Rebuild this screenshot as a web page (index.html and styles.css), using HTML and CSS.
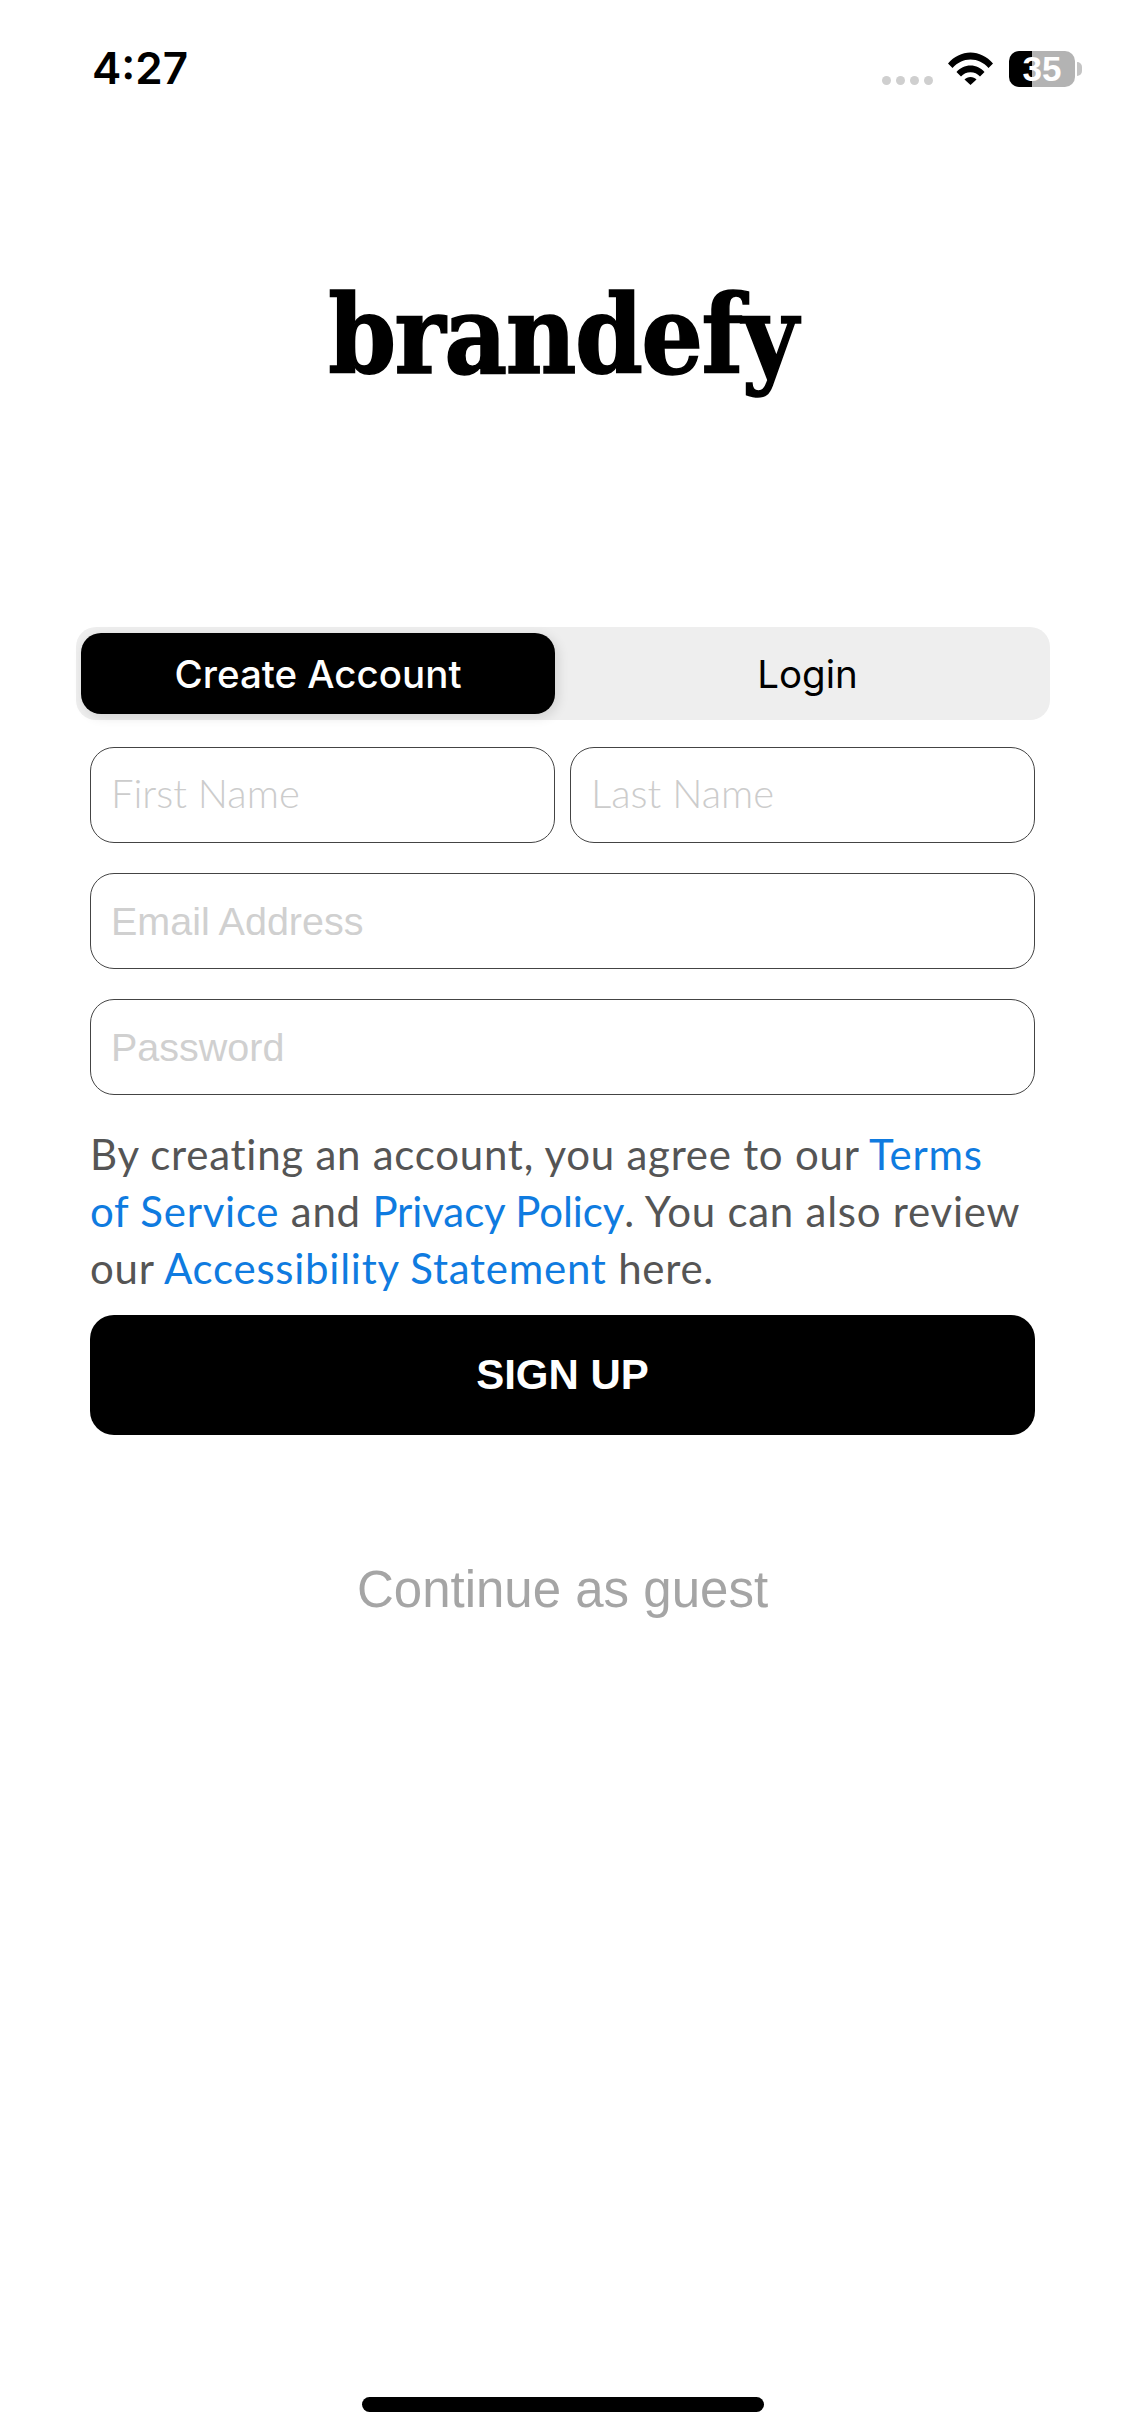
FILE: index.html
```html
<!DOCTYPE html>
<html lang="en">
<head>
<meta charset="utf-8">
<title>brandefy</title>
<link rel="stylesheet" href="styles.css">
</head>
<body>
<main class="screen">
  <header class="status">
    <span class="time">4:27</span>
    <div class="status-icons">
      <div class="signal"><i></i><i></i><i></i><i></i></div>
      <svg class="wifi" viewBox="0 0 45 33" aria-hidden="true">
        <path d="M0 11.5C6 4.5 14 0.5 22.5 0.5S39 4.5 45 11.5L40.5 16C35.5 10.500 29.500 7.500 22.500 7.500S9.500 10.500 4.500 16Z"/>
        <path d="M8.500 20C12 16 17 13.500 22.500 13.500S33 16 36.500 20L32 24.500C29.500 21.700 26.200 20.200 22.500 20.200S15.500 21.700 13 24.500Z"/>
        <path d="M16.500 27.500C18 26 20 25 22.500 25S27 26 28.500 27.500L22.500 33Z"/>
      </svg>
      <div class="battery">
        <div class="battery-body"><span class="battery-num">35</span></div>
        <div class="battery-nub"></div>
      </div>
    </div>
  </header>

  <div class="logo">brandefy</div>

  <div class="segment">
    <div class="seg seg-active">Create Account</div>
    <div class="seg seg-idle">Login</div>
  </div>

  <form class="form">
    <div class="row">
      <div class="field"><span class="ph ph-avenir">First Name</span></div>
      <div class="field"><span class="ph ph-avenir">Last Name</span></div>
    </div>
    <div class="field"><span class="ph ph-light">Email Address</span></div>
    <div class="field"><span class="ph ph-light">Password</span></div>
    <p class="legal">By creating an account, you agree to our <a class="link">Terms</a><br><a class="link">of Service</a> and <a class="link link-tight">Privacy Policy</a>. You can also review<br>our <a class="link">Accessibility Statement</a> here.</p>
    <div class="signup">SIGN UP</div>
  </form>

  <div class="guest">Continue as guest</div>

  <div class="home"></div>
</main>
</body>
</html>
```

FILE: styles.css
```css
* { box-sizing: border-box; }
html, body { margin: 0; padding: 0; background: #fff; }
.screen {
  width: 1125px;
  height: 2436px;
  display: flex;
  flex-direction: column;
  overflow: hidden;
  font-family: "Liberation Sans", Arial, sans-serif;
}
.status {
  display: flex;
  justify-content: space-between;
  align-items: flex-start;
  height: 120px;
  padding: 44px 43px 0 92px;
}
.time {
  font-family: Inter, sans-serif;
  font-weight: 600;
  font-size: 44px;
  line-height: 48px;
  color: #000;
}
.status-icons { display: flex; align-items: flex-start; padding-top: 7px; }
.signal { display: flex; gap: 5px; margin-top: 25px; margin-right: 15px; }
.signal i { display: block; width: 9px; height: 9px; border-radius: 50%; background: #cfcfcf; }
.wifi { width: 45px; height: 33px; margin-top: 1px; margin-right: 16px; fill: #000; }
.battery { display: flex; align-items: center; }
.battery-body {
  width: 66px;
  height: 36px;
  border-radius: 10px;
  background: linear-gradient(90deg, #000 0 23px, #b3b3b3 23px);
  display: flex;
  align-items: center;
  justify-content: center;
}
.battery-num { font-weight: 700; font-size: 35px; line-height: 36px; color: #fff; }
.battery-nub { width: 5px; height: 14px; margin-left: 2px; border-radius: 0 7px 7px 0; background: #c4c4c4; }

.logo {
  margin-top: 160px;
  height: 110px;
  text-align: center;
  font-family: "DejaVu Serif", serif;
  font-stretch: condensed;
  font-weight: 700;
  font-size: 108px;
  line-height: 110px;
  letter-spacing: -1.5px;
  color: #000;
  -webkit-text-stroke: 1.5px #000;
}
.segment {
  margin: 237px 75px 0 76px;
  height: 93px;
  padding: 6px 0 6px 5px;
  border-radius: 20px;
  background: #eeeeee;
  display: flex;
}
.seg {
  flex: 1;
  display: flex;
  align-items: center;
  justify-content: center;
  font-family: Inter, sans-serif;
  font-size: 38.500px;
  color: #000;
}
.seg-idle { padding-left: 10px; }
.seg-active {
  flex: 0 0 474px;
  border-radius: 20px;
  background: #000;
  color: #fff;
  font-weight: 500;
  box-shadow: 3px 3px 12px rgba(0,0,0,.12);
}
.form {
  margin: 27px 90px 0;
  display: flex;
  flex-direction: column;
  gap: 30px;
}
.row { display: flex; gap: 15px; }
.row .field { flex: 1; }
.field {
  height: 96px;
  border: 1px solid #444;
  border-radius: 24px;
  padding-left: 20px;
  display: flex;
  align-items: center;
  background: #fff;
}
.ph { color: #cccccc; font-size: 40px; }
.ph-avenir { font-family: Lato, sans-serif; font-weight: 300; margin-bottom: 4px; }
.ph-light { font-family: "Liberation Sans", sans-serif; font-size: 39.500px; color: #d0d0d0; }
.legal {
  margin: 1px 0 0;
  font-family: Lato, sans-serif;
  font-size: 42px;
  letter-spacing: 0.75px;
  font-variant-ligatures: none;
  line-height: 57px;
  color: #555;
  white-space: nowrap;
}
.link { color: #0f7be0; }
.link-tight { letter-spacing: -0.1px; }
.signup {
  margin-top: -12px;
  height: 120px;
  border-radius: 24px;
  background: #000;
  color: #fff;
  display: flex;
  align-items: center;
  justify-content: center;
  font-weight: 700;
  font-size: 42px;
}
.guest {
  margin-top: 125px;
  text-align: center;
  font-size: 51px;
  line-height: 60px;
  color: #a5a5a5;
}
.home {
  margin: auto auto 24px;
  width: 402px;
  height: 15px;
  border-radius: 8px;
  background: #000;
}
```
